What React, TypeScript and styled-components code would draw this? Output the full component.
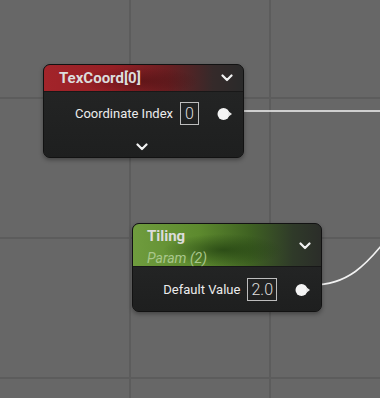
import React from 'react';
import styled, { createGlobalStyle } from 'styled-components';

type NodeData = {
  id: string;
  title: string;
  subtitle?: string;
  tint: 'red' | 'green';
  left: number;
  top: number;
  width: number;
  label: string;
  value: string;
  footer?: boolean;
};

const nodes: NodeData[] = [
  {
    id: 'texcoord',
    title: 'TexCoord[0]',
    tint: 'red',
    left: 43,
    top: 64,
    width: 201,
    label: 'Coordinate Index',
    value: '0',
    footer: true,
  },
  {
    id: 'tiling',
    title: 'Tiling',
    subtitle: 'Param (2)',
    tint: 'green',
    left: 132,
    top: 223,
    width: 190,
    label: 'Default Value',
    value: '2.0',
  },
];

const headers = {
  red: `radial-gradient(ellipse 60px 14px at 95px 16px, rgba(60, 10, 12, 0.45), transparent),
    linear-gradient(90deg, #a3242a 0%, #951f25 35%, #6a1e21 62%, #352a2a 85%, #2a2a2a 100%)`,
  green: `radial-gradient(ellipse 60px 16px at 90px 26px, rgba(30, 60, 15, 0.7), transparent),
    linear-gradient(90deg, #6f9c3e 0%, #5d8a2e 35%, #3f6222 62%, #2f3a29 85%, #2b2d29 100%)`,
};

const Chevron: React.FC = () => (
  <svg width="12" height="8" viewBox="0 0 12 8">
    <path d="M1.5 1.5 L6 6 L10.5 1.5" fill="none" stroke="#f2f2f2" strokeWidth="2.2" strokeLinecap="round" strokeLinejoin="round" />
  </svg>
);

const Pin: React.FC = () => (
  <svg width="16" height="14" viewBox="0 0 16 14">
    <circle cx="6.5" cy="7" r="6" fill="#f4f4f4" />
    <path d="M11 4 L15 7 L11 10 Z" fill="#e8e8e8" />
  </svg>
);

const App: React.FC = () => {
  return (
    <>
      <GlobalStyle />
      <Canvas>
        <Wires width="380" height="398" viewBox="0 0 380 398">
          <path d="M235 111 L382 111" stroke="#f2f2f2" strokeWidth="1.6" fill="none" />
          <path d="M312 285 C346 285 366 268 395 228" stroke="#f2f2f2" strokeWidth="1.6" fill="none" />
        </Wires>
        {nodes.map((node) => (
          <Node key={node.id} style={{ left: node.left, top: node.top, width: node.width }}>
            <Header $tint={node.tint} $tall={!!node.subtitle}>
              <Titles>
                <Title>{node.title}</Title>
                {node.subtitle && <Subtitle>{node.subtitle}</Subtitle>}
              </Titles>
              <HeaderChevron>
                <Chevron />
              </HeaderChevron>
            </Header>
            <Body $footer={!!node.footer}>
              <PinRow>
                <Label>{node.label}</Label>
                <ValueBox>{node.value}</ValueBox>
                <PinSlot>
                  <Pin />
                </PinSlot>
              </PinRow>
              {node.footer && (
                <Footer>
                  <Chevron />
                </Footer>
              )}
            </Body>
          </Node>
        ))}
      </Canvas>
    </>
  );
};

const GlobalStyle = createGlobalStyle`
  html, body {
    margin: 0;
    padding: 0;
    background: #676767;
  }
  body {
    font-family: Roboto, "Noto Sans", sans-serif;
  }
`;

const Canvas = styled.div`
  position: relative;
  width: 380px;
  height: 398px;
  overflow: hidden;
  background-color: #676767;
  background-image:
    linear-gradient(90deg, #5c5c5c 0 2px, transparent 2px),
    linear-gradient(180deg, #5c5c5c 0 2px, transparent 2px);
  background-size: 140px 140px;
  background-position: 129px 97px;
`;

const Wires = styled.svg`
  position: absolute;
  left: 0;
  top: 0;
`;

const Node = styled.div`
  position: absolute;
  display: flex;
  flex-direction: column;
  background: #202121;
  border: 1px solid #121212;
  border-radius: 7px;
  overflow: hidden;
  box-shadow: 0 2px 4px rgba(0, 0, 0, 0.35);
  box-sizing: border-box;
`;

const Header = styled.div<{ $tint: 'red' | 'green'; $tall: boolean }>`
  display: flex;
  align-items: center;
  justify-content: space-between;
  height: ${(p) => (p.$tall ? 43 : 27)}px;
  padding: ${(p) => (p.$tall ? '2px 10px 0 14px' : '0 10px 0 15px')};
  box-sizing: border-box;
  background: ${(p) => headers[p.$tint]};
  border-bottom: 1px solid #181818;
`;

const Titles = styled.div`
  display: flex;
  flex-direction: column;
  gap: 5px;
`;

const Title = styled.div`
  font-size: 15px;
  font-weight: 700;
  color: #dcdcdc;
  line-height: 18px;
`;

const Subtitle = styled.div`
  font-size: 14px;
  font-style: italic;
  color: #a9c78c;
  line-height: 16px;
`;

const HeaderChevron = styled.div`
  display: flex;
  align-items: center;
  padding-bottom: 1px;
`;

const Body = styled.div<{ $footer: boolean }>`
  display: flex;
  flex-direction: column;
  padding: ${(p) => (p.$footer ? '10px 0 6px' : '11px 0 10px')};
  background: linear-gradient(180deg, #232424 0%, #1e1f1f 100%);
  flex: 1;
`;

const PinRow = styled.div`
  display: flex;
  align-items: center;
  justify-content: flex-end;
  padding-right: 10px;
  gap: 7px;
`;

const Label = styled.span`
  font-size: 13px;
  color: #ececec;
`;

const ValueBox = styled.span`
  border: 1px solid #bdbdbd;
  padding: 0 3px;
  min-width: 11px;
  height: 21px;
  line-height: 21px;
  font-size: 16px;
  font-weight: 300;
  color: #dedede;
  text-align: center;
`;

const PinSlot = styled.span`
  display: flex;
  margin-left: 11px;
`;

const Footer = styled.div`
  display: flex;
  justify-content: center;
  margin-top: 18px;
  padding-right: 3px;
`;

export default App;
